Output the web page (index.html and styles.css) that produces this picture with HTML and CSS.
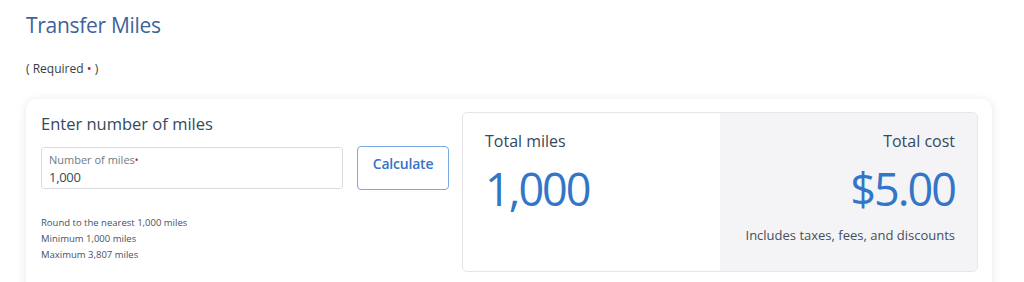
FILE: index.html
```html
<!DOCTYPE html>
<html lang="en">
<head>
<meta charset="utf-8">
<title>Transfer Miles</title>
<link rel="stylesheet" href="styles.css">
</head>
<body>
<main class="page">
  <h1 class="title">Transfer Miles</h1>
  <p class="required">( Required <span class="dot">•</span> )</p>
  <section class="card">
    <div class="entry">
      <h2 class="entry-title">Enter number of miles</h2>
      <div class="entry-row">
        <label class="field">
          <span class="field-label">Number of miles<span class="dot">•</span></span>
          <span class="field-value">1,000</span>
        </label>
        <button class="calc" type="button">Calculate</button>
      </div>
      <ul class="hints">
        <li>Round to the nearest 1,000 miles</li>
        <li>Minimum 1,000 miles</li>
        <li>Maximum 3,807 miles</li>
      </ul>
    </div>
    <div class="summary">
      <div class="sum-col sum-miles">
        <div class="sum-label">Total miles</div>
        <div class="sum-value">1,000</div>
      </div>
      <div class="sum-col sum-cost">
        <div class="sum-label">Total cost</div>
        <div class="sum-value">$5.00</div>
        <div class="sum-note">Includes taxes, fees, and discounts</div>
      </div>
    </div>
  </section>
</main>
</body>
</html>
```

FILE: styles.css
```css
* { box-sizing: border-box; }
html, body { margin: 0; padding: 0; background: #ffffff; }
body {
  font-family: "Open Sans", "Noto Sans", "Liberation Sans", sans-serif;
  color: #36495a;
  overflow: hidden;
}
.page { padding: 10px 32px 0 26px; }
.title {
  margin: 0;
  font-size: 21px;
  line-height: 30px;
  font-weight: 400;
  color: #40639a;
  letter-spacing: -0.3px;
}
.required {
  margin: 20px 0 0;
  font-size: 12px;
  line-height: 16px;
  color: #333d47;
}
.dot { color: #c3141e; font-size: 13px; }
.card {
  margin-top: 22px;
  height: 200px;
  background: #fff;
  border-radius: 10px;
  box-shadow: 0 1px 10px rgba(0, 0, 0, 0.10);
  padding: 13px 14px 0 15px;
  display: grid;
  grid-template-columns: 408px 1fr;
  column-gap: 13px;
  align-items: start;
}
.entry-title {
  margin: 1px 0 0;
  font-size: 16.5px;
  line-height: 22px;
  font-weight: 400;
  color: #36495a;
}
.entry-row {
  display: flex;
  gap: 14px;
  margin-top: 11px;
  align-items: flex-start;
}
.field {
  width: 302px;
  height: 42px;
  margin-top: 1px;
  border: 1px solid #d9dde3;
  border-radius: 3px;
  padding: 4px 7px 0;
  display: flex;
  flex-direction: column;
}
.field-label {
  font-size: 11px;
  line-height: 15px;
  color: #6f7a86;
}
.field-label .dot { font-size: 10px; }
.field-value {
  font-size: 13px;
  line-height: 18px;
  color: #36495a;
  letter-spacing: -0.3px;
}
.calc {
  width: 92px;
  height: 44px;
  border: 1.5px solid #7aa8e2;
  border-radius: 4px;
  background: #fff;
  font-family: inherit;
  font-size: 14px;
  font-weight: 600;
  color: #3774c4;
  padding: 0 0 10px;
  letter-spacing: -0.2px;
}
.hints {
  list-style: none;
  margin: 25px 0 0;
  padding: 0;
  font-size: 9.5px;
  line-height: 16px;
  color: #46525e;
}
.summary {
  height: 160px;
  border: 1px solid #e5e7ea;
  border-radius: 5px;
  display: grid;
  grid-template-columns: 1fr 1fr;
  overflow: hidden;
}
.sum-col { padding: 17px 22px 0; }
.sum-cost { background: #f4f4f6; text-align: right; }
.sum-label {
  font-size: 16px;
  line-height: 22px;
  color: #36495a;
}
.sum-value {
  margin-top: 12px;
  font-size: 45px;
  line-height: 50px;
  font-weight: 400;
  color: #3376c8;
  letter-spacing: -2px;
}
.sum-note {
  margin-top: 12px;
  font-size: 13px;
  line-height: 18px;
  color: #444f5b;
}
```
